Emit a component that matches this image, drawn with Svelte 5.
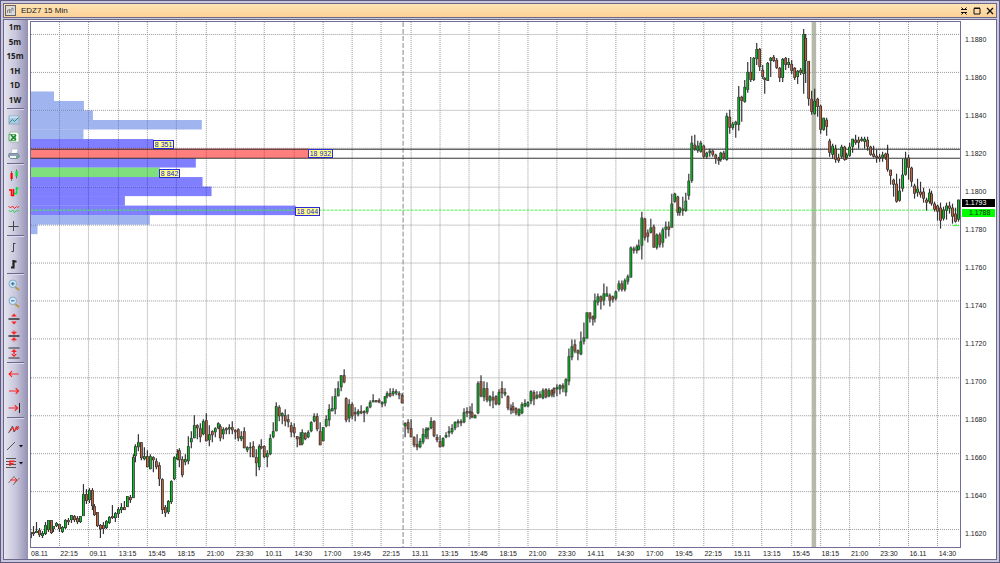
<script>
  // One candle per entry: high, low, body top, body bottom (plot rows), direction.
  const series = `
531 541 533 539 g|527 537 533 535 r|523 534 532 534 g|529 538 531 536 r|532 539 534 537 g|523 536 526 535 g|521 533 521 531 g|521 535 521 534 r|527 533 527 530 g|523 528 524 527 g
525 533 525 530 r|527 534 528 533 g|520 530 521 529 g|519 526 521 523 r|516 524 516 521 g|516 523 517 521 r|517 525 519 523 r|517 524 517 523 g|485 517 495 517 g|490 505 495 502 r
489 504 491 501 g|489 511 491 507 r|505 517 507 516 r|513 528 513 527 r|525 539 526 530 r|523 535 526 530 r|521 530 522 529 g|517 525 518 524 g|506 520 517 519 r|513 523 514 519 g
508 519 510 515 g|504 514 508 511 g|502 511 508 511 r|497 508 497 508 g|496 504 498 501 r|455 499 458 499 g|445 463 447 457 g|435 452 443 448 g|443 461 443 459 r|448 461 457 460 g
451 468 457 468 r|455 470 457 470 g|457 473 458 461 r|459 470 462 468 r|463 487 466 480 r|479 515 480 511 r|506 518 508 514 r|501 515 502 513 g|481 505 482 503 g|457 481 458 480 g
450 461 455 460 g|449 468 451 461 r|457 478 460 476 r|455 466 460 463 g|437 465 447 462 g|432 449 439 443 g|416 439 426 439 g|425 440 426 429 r|424 443 429 438 r|420 436 422 435 g
414 442 421 442 r|426 447 435 441 g|431 443 432 436 r|428 438 429 433 g|423 430 424 429 g|425 442 427 439 r|428 440 430 435 g|428 435 429 431 r|425 435 428 430 g|422 435 428 431 r
430 440 431 433 r|429 442 430 439 r|432 442 437 440 g|428 449 432 449 r|447 453 448 451 g|443 458 448 449 g|442 458 447 458 r|450 477 458 464 r|445 471 447 468 g|440 450 447 449 r
446 459 447 458 r|451 468 454 458 g|435 456 439 455 g|423 439 432 438 g|403 432 407 432 g|406 422 408 417 r|413 425 414 417 g|410 427 416 422 r|415 428 420 423 r|423 438 426 433 r
424 438 428 434 r|437 448 437 440 r|433 446 438 446 r|430 446 433 445 g|433 441 434 440 r|431 439 433 438 g|422 433 423 432 g|414 423 417 422 g|414 432 417 430 r|423 446 432 446 r
428 442 428 442 g|416 428 420 427 g|405 427 410 421 g|397 412 409 412 g|389 415 397 410 g|382 397 389 397 g|376 392 376 388 g|370 384 376 383 r|398 423 399 421 r|400 423 405 419 g
403 420 405 417 r|408 422 413 415 r|410 417 412 415 g|406 415 412 414 r|411 423 412 414 r|407 415 408 413 g|401 409 403 408 g|395 403 401 403 g|401 403 401 403 r|399 404 401 403 r
402 408 403 405 g|397 407 397 404 g|392 399 394 397 g|389 398 394 397 r|389 397 392 395 g|390 396 392 394 g|392 400 394 396 r|394 404 396 404 r|423 438 424 427 g|420 434 423 430 r
420 438 429 438 r|437 448 438 446 r|435 451 445 448 r|439 449 442 448 g|429 445 435 443 g|428 440 430 438 g|428 440 429 431 g|418 430 422 429 g|421 438 422 437 r|435 443 438 441 r
436 448 442 448 r|438 448 439 447 g|433 439 436 438 g|427 438 432 434 g|425 435 429 433 g|422 431 423 429 g|420 428 422 424 g|420 427 422 424 r|409 424 413 423 g|408 418 412 414 r
407 420 412 414 r|404 419 413 418 r|415 419 416 419 g|382 415 384 414 g|376 398 382 397 r|382 402 389 398 g|383 403 389 401 r|396 407 397 402 g|392 409 398 401 r|396 406 397 405 r
390 406 393 405 g|382 399 389 394 r|389 397 393 395 g|396 411 397 409 r|405 415 409 411 r|403 414 407 411 r|408 416 409 414 r|409 417 410 416 g|403 415 405 414 g|400 408 404 407 g
402 408 403 407 g|391 405 392 402 g|391 406 393 400 r|392 400 396 399 g|392 399 395 398 r|389 400 391 399 g|389 399 390 398 r|389 398 391 397 g|390 398 391 396 r|388 398 389 394 r
385 397 388 390 g|385 395 386 390 g|384 393 386 389 r|379 397 380 393 g|349 386 357 382 g|340 361 347 358 g|340 354 345 352 r|350 361 351 354 r|332 356 342 355 g|323 345 338 342 g
313 339 313 339 g|313 323 313 319 r|316 326 317 320 r|294 323 301 319 g|294 306 297 303 g|296 310 297 302 r|284 306 294 301 g|287 297 294 297 g|294 307 296 301 r|296 303 297 300 r
291 301 292 299 g|281 292 284 290 g|281 292 284 290 r|279 292 281 290 g|275 285 277 282 g|247 278 248 278 g|247 254 249 251 r|245 254 247 251 g|240 251 246 250 g|212 260 218 246 g
218 241 219 238 r|230 243 233 237 r|219 234 228 233 g|225 248 227 248 r|234 250 235 248 g|233 248 235 245 r|228 248 230 243 g|222 239 227 230 g|222 237 227 230 r|194 228 204 228 g
193 203 194 202 g|196 216 197 213 r|207 216 208 213 g|197 216 209 211 r|193 212 201 211 g|174 200 181 196 g|136 183 143 181 g|135 151 145 149 r|141 153 146 151 g|141 153 143 152 g
145 159 146 157 r|152 159 153 157 g|149 157 151 153 g|150 157 151 155 r|154 164 155 159 r|157 165 159 161 r|152 162 153 160 g|151 160 153 158 r|113 161 116 160 g|110 134 117 128 r
122 130 124 128 g|121 138 122 125 g|86 131 97 125 g|96 122 97 101 r|80 103 87 102 g|62 93 72 90 g|57 82 72 80 r|57 81 58 80 g|43 65 49 59 g|48 71 49 67 r
65 79 70 77 r|77 94 78 80 r|62 81 63 81 g|57 77 58 61 g|55 62 57 61 r|58 69 60 68 r|67 82 68 78 r|58 82 59 78 g|57 70 58 65 r|58 68 62 65 g
60 74 64 71 r|67 80 68 78 r|70 84 71 77 g|68 75 70 73 r|29 94 34 74 g|34 83 38 61 r|61 106 61 99 r|91 115 99 112 r|89 115 101 114 g|98 117 99 107 r
105 134 106 130 r|118 131 118 130 g|118 136 120 127 r|139 157 141 153 r|144 159 146 155 g|145 163 149 160 r|154 163 158 161 r|145 159 147 157 g|146 161 147 160 r|153 160 155 158 g
143 157 147 156 g|139 153 139 147 g|135 145 140 143 r|137 149 140 143 r|137 142 139 141 g|137 149 139 142 g|137 151 140 147 r|146 156 147 155 r|146 158 154 157 r|150 163 156 158 r
154 162 157 159 r|152 162 155 158 g|153 160 154 158 r|145 172 154 170 r|170 185 170 176 r|179 197 180 185 r|174 203 184 202 r|179 202 191 201 g|159 192 175 189 g|152 176 159 175 g
155 180 158 168 r|167 187 168 182 r|184 199 186 194 r|179 197 189 193 g|182 198 192 195 r|188 203 192 199 r|198 211 200 203 r|189 204 193 202 g|191 206 194 204 r|202 212 204 210 r
205 221 206 212 r|203 229 208 221 r|207 221 210 219 g|203 220 206 211 g|202 214 206 209 r|204 224 208 217 r|208 223 214 222 r|200 222 200 220 g`;
  const step = 2.93;
  const candles = series.trim().split(/[|\n]/).map((row, i) => {
    const [high, low, top, bottom, dir] = row.split(' ');
    return { x: Math.floor(30.5 + step * i) + 0.5, high: +high, low: +low, top: +top, bottom: +bottom, up: dir === 'g' };
  });

  const times = '08.11 22:15 09.11 13:15 15:45 18:15 21:00 23:30 10.11 14:30 17:00 19:45 22:15 13.11 13:15 15:45 18:15 21:00 23:30 14.11 14:30 17:00 19:45 22:15 15.11 13:15 15:45 18:15 21:00 23:30 16.11 14:30'.split(' ');
  const prices = Array.from({ length: 14 }, (_, i) => (1.188 - i * 0.002).toFixed(4));
  const gridX = Array.from({ length: 31 }, (_, i) => Math.floor(59.6 + i * 29.3) + 0.5);
  const gridY = Array.from({ length: 14 }, (_, i) => Math.floor(34.3 + i * 38.2) + 0.5);

  // Volume profile, one bar per price level from the top down.
  const levels = [
    [54, 'light'], [84, 'light'], [93, 'light'], [202, 'light'], [83.5, 'light'],
    [153.5, 'blue'], [309, 'red'], [196, 'blue'], [160, 'green'], [202.7, 'blue'],
    [211.7, 'blue'], [125, 'blue'], [296, 'blue'], [150, 'light'], [37.5, 'light']
  ].map(([end, tone], i) => ({ end, tone, y: 91.6 + i * 9.53 }));
  const tags = [
    { text: '8 351', x: 153, y: 140 },
    { text: '18 932', x: 308, y: 149 },
    { text: '8 842', x: 159, y: 169 },
    { text: '18 044', x: 295, y: 207 }
  ];
  const left = (x) => `${((x - 31) / 930) * 100}%`;
  const top = (y) => `${((y - 22) / 526) * 100}%`;

  const groups = [
    ['picture', 'excel', 'print'],
    ['candles', 'bars', 'zigzag', 'cross'],
    ['thin', 'thick'],
    ['zoomin', 'zoomout', 'expand', 'shrink', 'fit'],
    ['back', 'forward', 'end'],
    ['wave', 'line', 'fibo', 'channel']
  ];
  const names = {
    picture: 'Save picture', excel: 'Export to Excel', print: 'Print', candles: 'Candles', bars: 'Bars',
    zigzag: 'Lines', cross: 'Crosshair', thin: 'Thin bars', thick: 'Thick bars', zoomin: 'Zoom in',
    zoomout: 'Zoom out', expand: 'Stretch', shrink: 'Compress', fit: 'Fit height', back: 'Scroll back',
    forward: 'Scroll forward', end: 'Scroll to end', wave: 'Indicators', line: 'Line', fibo: 'Fibonacci', channel: 'Channel'
  };
</script>

<main class="window">
  <header class="title">
    <svg class="logo" viewBox="0 0 11 11" aria-hidden="true">
      <rect x=".5" y=".5" width="10" height="10" fill="#dddbd6" stroke="#66646c" />
      <path d="M2.500 8V5M2.500 6l2-2v4M6 8V4l2-1v3" fill="none" stroke="#88868c" />
    </svg>
    <h1>EDZ7 15 Min</h1>
    <div class="controls">
      <button aria-label="Minimize"><svg viewBox="0 0 8 8"><path d="M1 2.500h6M1 5.500h6M1.500 .5l1.500 1.500M6.500 .5L5 2M1.500 7.500L3 6M6.500 7.500L5 6" /></svg></button>
      <button aria-label="Maximize"><svg viewBox="0 0 8 8"><path d="M1 1.500h6v5.500H1zM1 1h6" /></svg></button>
      <button aria-label="Close"><svg viewBox="0 0 8 8"><path d="M1 1l6 6M7 1L1 7" stroke-width="1.300" /></svg></button>
    </div>
  </header>

  <div class="body">
    <nav class="tools">
      <div class="frames">
        {#each ['1m', '5m', '15m', '1H', '1D', '1W'] as f}<button>{f}</button>{/each}
      </div>
      {#each groups as group}
        <hr />
        {#each group as id}
          <button class="tool" aria-label={names[id]}>
            <svg viewBox="0 0 20 16">
              {#if id === 'picture'}
                <rect x="5" y="4" width="10" height="8" fill="#a9cbe4" stroke="#86a2bd" stroke-width=".8" />
                <path d="M5.500 5h9" stroke="#e6f3ff" /><path d="M5.500 10.500l3-3 2 2 4-4" fill="none" stroke="#2f8a86" />
              {:else if id === 'excel'}
                <path d="M6 3h7l2 2v8H6z" fill="#f6fff6" stroke="#8fb896" stroke-width=".8" />
                <rect x="5" y="5.500" width="6.500" height="6" fill="#d5efd4" stroke="#4f9a59" stroke-width=".8" />
                <path d="M7 6l5 5M12 6l-5 5" stroke="#16812c" stroke-width="1.500" />
              {:else if id === 'print'}
                <path d="M7 7l1-4h6l-1 4" fill="#fff" stroke="#b4c0cc" stroke-width=".8" />
                <path d="M5 7.500h9l1.500 3-2 2H6.500l-2-2z" fill="#8fa1b2" stroke="#6f8292" stroke-width=".8" />
                <path d="M6 11h6" stroke="#f4f8fb" stroke-width="2" /><path d="M12.500 11h2" stroke="#35b649" />
              {:else if id === 'candles'}
                <path d="M7.500 4v10M12.500 2.500v9" stroke="#555" stroke-width=".8" /><rect x="6.500" y="6" width="2.200" height="6" fill="#f00" />
                <rect x="11.500" y="4" width="2.200" height="5.500" fill="#00e038" />
              {:else if id === 'bars'}
                <path d="M5 6h2.500v6M7.500 11.500h2V5" fill="none" stroke="#f00" stroke-width="1.500" />
                <path d="M10 9.500h2.500V3M12.500 4.500h2" fill="none" stroke="#00e038" stroke-width="1.500" />
              {:else if id === 'zigzag'}
                <path d="M4.500 5l2 2 2-2 2 2.500 2-2 1 1 1.500-1" fill="none" stroke="#f22" />
                <path d="M5 9.500l1.500 1.500 2-2 2 2.500 2-2 1 1 1.500-1.500" fill="none" stroke="#22d044" />
              {:else if id === 'cross'}
                <path d="M9.500 3v10M4.500 8.500h10" stroke="#444" />
              {:else if id === 'thin'}
                <path d="M7.500 12.500h2V4M9.500 4.500h2" fill="none" stroke="#444" />
              {:else if id === 'thick'}
                <path d="M7 11.500h3M9.500 12.500V4M9 5.500h3.500" fill="none" stroke="#222" stroke-width="2.200" />
              {:else if id === 'zoomin' || id === 'zoomout'}
                <path d="M11 10l4 3" stroke="#b99748" stroke-width="2" />
                <circle cx="8.800" cy="6.800" r="3.800" fill="#cbe8f8" stroke="#86a9c2" />
                <path d={id === 'zoomin' ? 'M7 6.800h3.600M8.800 5v3.600' : 'M7 6.800h3.600'} stroke="#315f91" />
              {:else if id === 'expand'}
                <path d="M4.500 8h11" stroke="#333" stroke-width="1.500" />
                <path d="M10 2.500l2.800 3H7.200zM10 13.500l2.800-3H7.200z" fill="#f22" />
              {:else if id === 'shrink'}
                <path d="M4.500 8h11" stroke="#333" stroke-width="1.500" />
                <path d="M10 6.500L12.500 4h-5zM10 9.500l2.500 2.500h-5zM10 2v2M10 14v-2" fill="#f22" stroke="#f22" stroke-width=".6" />
              {:else if id === 'fit'}
                <path d="M4.500 3h11M4.500 13h11" stroke="#333" />
                <path d="M10 4l3 3H7zM10 12l3-3H7zM9.300 6h1.400v4H9.300z" fill="#f22" />
              {:else if id === 'back'}
                <path d="M5 8h9.500M8 5.200L5.200 8 8 10.800" fill="none" stroke="#f22" stroke-width="1.200" />
              {:else if id === 'forward'}
                <path d="M5 8h9.500M11.700 5.200L14.500 8l-2.800 2.800" fill="none" stroke="#f22" stroke-width="1.200" />
              {:else if id === 'end'}
                <path d="M4.500 8h9M10.700 5.200L13.500 8l-2.800 2.800" fill="none" stroke="#f22" stroke-width="1.200" /><path d="M15.500 3v10" stroke="#222" />
              {:else if id === 'wave'}
                <path d="M4.500 12l4-7 1.500 6 4.500-6" fill="none" stroke="#555" /><path d="M6 10.500l3-4 1.500 3.500 2-5 .8 4 1.700-3" fill="none" stroke="#f22" />
              {:else if id === 'line'}
                <path d="M3 12l8-8" stroke="#555" /><path d="M15 7h4l-2 2.500z" fill="#111" />
              {:else if id === 'fibo'}
                <path d="M2 3.500h10M2 6.500h10M2 9.500h10M2 12.500h10" stroke="#555" /><path d="M6 11V6.200h4.500M6 8.500h3.500" fill="none" stroke="#f22" stroke-width="1.500" />
                <path d="M15 7h4l-2 2.500z" fill="#111" />
              {:else}
                <path d="M4.500 11l6-7M9 13l6.500-7" stroke="#777" /><path d="M6 8h7M10.500 5.500L13 8l-2.500 2.500" fill="none" stroke="#f22" />
              {/if}
            </svg>
          </button>
        {/each}
      {/each}
    </nav>

    <section class="chart">
      <div class="plot">
        <svg viewBox="31 22 930 526" preserveAspectRatio="none" role="img" aria-label="EDZ7 15 minute candles">
          <rect x="812.500" y="22" width="4.500" height="526" fill="#b6baab" />
          <g class="grid">
            {#each gridX as x}<path d="M{x} 22V548" />{/each}
            {#each gridY as y}<path d="M31 {y}H961" />{/each}
          </g>
          {#each levels as v}<rect class={v.tone} x="31" y={v.y} width={v.end - 31} height="9.530" />{/each}
          <path d="M403.500 22V548" stroke="#888" stroke-dasharray="5 2" />
          <path d="M31 149.500H961M31 158.500H961" stroke="#333" />
          <path d="M31 210.500H961" stroke="#4cf04c" stroke-dasharray="3 1" />
          <path d="M954 226h6M957 224v2" stroke="#3f3" />
          {#each candles as c}
            <path class="wick" d="M{c.x} {c.high}V{c.low}" />
            <rect class="edge" x={c.x - 1.4} y={c.top} width="2.800" height={c.bottom - c.top} />
            <rect class:up={c.up} class="core" x={c.x - 0.6} y={c.top + 0.5} width="1.200" height={c.bottom - c.top - 1} />
          {/each}
        </svg>
        {#each tags as t}<span class="tag" style:left={left(t.x)} style:top={top(t.y)}>{t.text}</span>{/each}
      </div>
      <div class="prices">
        {#each prices as p}<span>{p}</span>{/each}
        <b class="last">1.1793</b>
        <b class="bid">1.1788</b>
      </div>
      <div class="times">
        {#each times as t}<span>{t}</span>{/each}
      </div>
    </section>
  </div>
</main>

<style>
  :global(body) { margin: 0; }
  * { box-sizing: border-box; }
  .window {
    display: flex;
    flex-direction: column;
    gap: 1px;
    height: 100vh;
    padding: 2px;
    border: 1px solid #5d5980;
    background: #c9c8de;
    font-family: "Liberation Sans", Arial, sans-serif;
    color: #222;
  }
  button { padding: 0; border: 0; background: none; color: inherit; font: inherit; }
  .title {
    display: flex;
    align-items: center;
    flex: 0 0 15px;
    gap: 5px;
    padding: 0 2px 0 1px;
    border: 1px solid #6d6888;
    background: linear-gradient(#ffe3b4, #fcd298);
  }
  .logo { width: 11px; height: 11px; }
  h1 { margin: 0; font-size: 8px; font-weight: 400; line-height: 12px; }
  .controls { display: flex; gap: 5px; margin-left: auto; }
  .controls button { display: flex; width: 8px; height: 8px; }
  .controls svg { width: 8px; height: 8px; fill: none; stroke: #111; }
  .body { display: flex; flex: 1; min-height: 0; border: 1px solid #6d6888; }
  .tools {
    display: flex;
    flex-direction: column;
    flex: 0 0 24px;
    background: linear-gradient(90deg, #e4e4f0, #c6c5da 50%, #9490b4);
  }
  .frames {
    display: grid;
    grid-template-rows: repeat(6, 1fr);
    height: 87px;
    font: 700 8px/14px "Open Sans", sans-serif;
  }
  .frames button { padding-right: 2px; }
  hr { width: 17px; height: 2px; margin: 1px 0 1px 3px; border: 0; background: linear-gradient(#6b678c 50%, #dddcea 50%); }
  .tool { display: flex; height: 17px; align-items: center; }
  .tool svg { width: 20px; height: 16px; }
  .chart {
    display: grid;
    flex: 1;
    min-width: 0;
    grid-template: minmax(0, 1fr) 11px / minmax(0, 1fr) 35px;
    padding: 1px 0 0 2px;
    background: #fff;
  }
  .plot { position: relative; border: 1px solid #716d94; }
  .plot svg { display: block; width: 100%; height: 100%; }
  .grid path { fill: none; stroke: #999; stroke-dasharray: 1 1; }
  .light { fill: #4169e1; opacity: 0.5; }
  .blue { fill: #00f; opacity: 0.5; }
  .red { fill: #f00; opacity: 0.5; }
  .green { fill: #00c000; opacity: 0.5; }
  .wick { stroke: #333; stroke-width: 1.2; }
  .edge { fill: #2a2a2a; }
  .core { fill: #c8643c; }
  .core.up { fill: #00c81e; }
  .tag {
    position: absolute;
    padding: 0 1px;
    border: 1px solid #2a2ad8;
    background: #ffff8c;
    color: #22c;
    font-size: 7px;
    line-height: 7px;
    white-space: nowrap;
  }
  .prices {
    position: relative;
    display: grid;
    grid-row: span 2;
    grid-template-rows: repeat(14, 1fr);
    align-items: center;
    padding-bottom: 6px;
    font-size: 7px;
    line-height: 8px;
  }
  .prices span { padding-left: 4px; }
  .prices b { position: absolute; left: 1px; right: 1px; font-weight: 400; }
  .last { top: 33%; padding-left: 3px; background: #000; color: #fff; }
  .bid { top: 35%; padding-left: 7px; background: #0f0; }
  .times {
    display: grid;
    grid-template-columns: repeat(32, 1fr);
    margin-right: -7px;
    padding-left: 1px;
    font-size: 7px;
    line-height: 12px;
  }
</style>
